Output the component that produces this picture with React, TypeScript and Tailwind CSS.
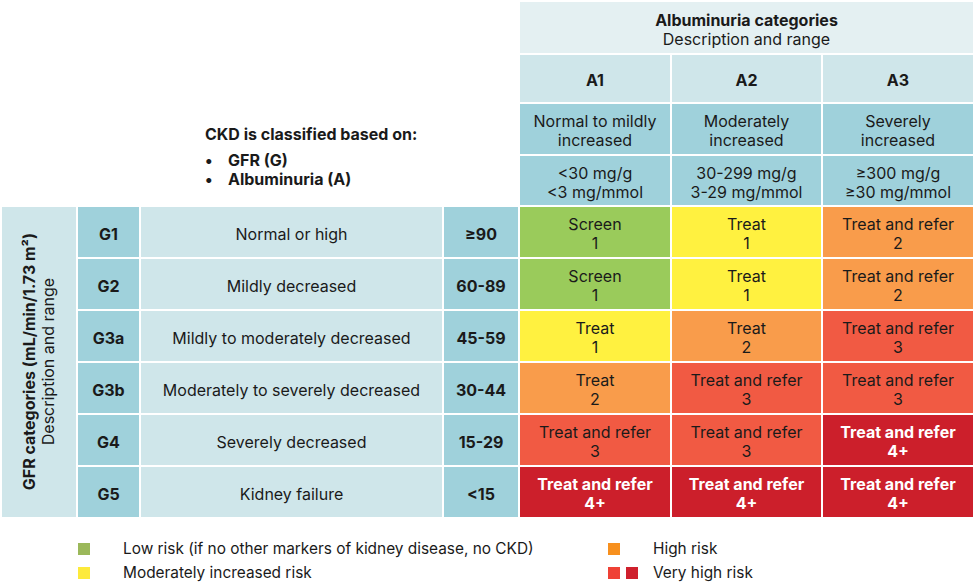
import React from "react";

type Risk = "green" | "yellow" | "orange" | "red" | "dark";

const riskClass: Record<Risk, string> = {
  green: "bg-[#9acb5b] text-[#1a1a1a]",
  yellow: "bg-[#fff140] text-[#1a1a1a]",
  orange: "bg-[#f99c4b] text-[#1a1a1a]",
  red: "bg-[#f15a43] text-[#1a1a1a]",
  dark: "bg-[#cc1f2b] text-white font-bold",
};

interface GfrRow {
  code: string;
  desc: string;
  range: string;
  cells: { label: string; num: string; risk: Risk }[];
}

const rows: GfrRow[] = [
  {
    code: "G1",
    desc: "Normal or high",
    range: "≥90",
    cells: [
      { label: "Screen", num: "1", risk: "green" },
      { label: "Treat", num: "1", risk: "yellow" },
      { label: "Treat and refer", num: "2", risk: "orange" },
    ],
  },
  {
    code: "G2",
    desc: "Mildly decreased",
    range: "60-89",
    cells: [
      { label: "Screen", num: "1", risk: "green" },
      { label: "Treat", num: "1", risk: "yellow" },
      { label: "Treat and refer", num: "2", risk: "orange" },
    ],
  },
  {
    code: "G3a",
    desc: "Mildly to moderately decreased",
    range: "45-59",
    cells: [
      { label: "Treat", num: "1", risk: "yellow" },
      { label: "Treat", num: "2", risk: "orange" },
      { label: "Treat and refer", num: "3", risk: "red" },
    ],
  },
  {
    code: "G3b",
    desc: "Moderately to severely decreased",
    range: "30-44",
    cells: [
      { label: "Treat", num: "2", risk: "orange" },
      { label: "Treat and refer", num: "3", risk: "red" },
      { label: "Treat and refer", num: "3", risk: "red" },
    ],
  },
  {
    code: "G4",
    desc: "Severely decreased",
    range: "15-29",
    cells: [
      { label: "Treat and refer", num: "3", risk: "red" },
      { label: "Treat and refer", num: "3", risk: "red" },
      { label: "Treat and refer", num: "4+", risk: "dark" },
    ],
  },
  {
    code: "G5",
    desc: "Kidney failure",
    range: "<15",
    cells: [
      { label: "Treat and refer", num: "4+", risk: "dark" },
      { label: "Treat and refer", num: "4+", risk: "dark" },
      { label: "Treat and refer", num: "4+", risk: "dark" },
    ],
  },
];

const albCols = [
  { code: "A1", desc: ["Normal to mildly", "increased"], range: ["<30 mg/g", "<3 mg/mmol"] },
  { code: "A2", desc: ["Moderately", "increased"], range: ["30-299 mg/g", "3-29 mg/mmol"] },
  { code: "A3", desc: ["Severely", "increased"], range: ["≥300 mg/g", "≥30 mg/mmol"] },
];

const cell = "flex flex-col items-center justify-center text-center pt-[4px]";

export default function App() {
  return (
    <div
      className="w-[974px] h-[584px] bg-white text-[16px] leading-[19px] text-[#1a1a1a] overflow-hidden"
      style={{ fontFamily: "Inter, 'Noto Sans', 'Liberation Sans', sans-serif" }}
    >
      <div className="grid grid-cols-[74px_61px_301px_74px_150px_149px_150px] grid-rows-[51px_47px_50px_49px_repeat(6,50px)] gap-[2px] pl-[2px] pt-[2px]">
        {/* top-left note */}
        <div className="col-span-4 row-span-4 pl-[203px] pt-[123px]">
          <div className="font-bold">CKD is classified based on:</div>
          <div className="mt-[7px] font-bold">
            <div className="flex">
              <span className="w-[23px]">•</span>
              <span>GFR (G)</span>
            </div>
            <div className="flex">
              <span className="w-[23px]">•</span>
              <span>Albuminuria (A)</span>
            </div>
          </div>
        </div>

        {/* albuminuria header */}
        <div className="col-span-3 bg-[#e4f0f2] text-center pt-[9px]">
          <div className="font-bold">Albuminuria categories</div>
          <div>Description and range</div>
        </div>
        {albCols.map((c) => (
          <div key={c.code} className={`${cell} bg-[#cfe6ea] font-bold`}>
            {c.code}
          </div>
        ))}
        {albCols.map((c) => (
          <div key={c.code + "d"} className={`${cell} bg-[#9fd1db]`}>
            <div>{c.desc[0]}</div>
            <div>{c.desc[1]}</div>
          </div>
        ))}
        {albCols.map((c) => (
          <div key={c.code + "r"} className={`${cell} bg-[#9fd1db]`}>
            <div>{c.range[0]}</div>
            <div>{c.range[1]}</div>
          </div>
        ))}

        {/* GFR side label */}
        <div className="row-span-6 bg-[#cfe6ea] flex items-center justify-center">
          <div className="[writing-mode:vertical-rl] rotate-180 text-center">
            <div className="font-bold">GFR categories (mL/min/1.73 m²)</div>
            <div>Description and range</div>
          </div>
        </div>

        {rows.map((r) => (
          <React.Fragment key={r.code}>
            <div className={`${cell} bg-[#9fd1db] font-bold`}>{r.code}</div>
            <div className={`${cell} bg-[#cfe6ea]`}>{r.desc}</div>
            <div className={`${cell} bg-[#9fd1db] font-bold`}>{r.range}</div>
            {r.cells.map((c, i) => (
              <div key={i} className={`${cell} ${riskClass[c.risk]}`}>
                <div>{c.label}</div>
                <div>{c.num}</div>
              </div>
            ))}
          </React.Fragment>
        ))}
      </div>

      {/* legend */}
      <div className="grid grid-cols-[530px_1fr] gap-y-[5px] pl-[78px] mt-[22px] text-[15.4px]">
        <div className="flex items-center">
          <div className="w-[45px] flex">
            <span className="w-[12px] h-[12px] bg-[#9bb85a]" />
          </div>
          <span>Low risk (if no other markers of kidney disease, no CKD)</span>
        </div>
        <div className="flex items-center">
          <div className="w-[45px] flex">
            <span className="w-[12px] h-[12px] bg-[#f7901e]" />
          </div>
          <span>High risk</span>
        </div>
        <div className="flex items-center">
          <div className="w-[45px] flex">
            <span className="w-[12px] h-[12px] bg-[#fdea3b]" />
          </div>
          <span>Moderately increased risk</span>
        </div>
        <div className="flex items-center">
          <div className="w-[45px] flex gap-[6px]">
            <span className="w-[12px] h-[12px] bg-[#ef4135]" />
            <span className="w-[12px] h-[12px] bg-[#cf202d]" />
          </div>
          <span>Very high risk</span>
        </div>
      </div>
    </div>
  );
}
